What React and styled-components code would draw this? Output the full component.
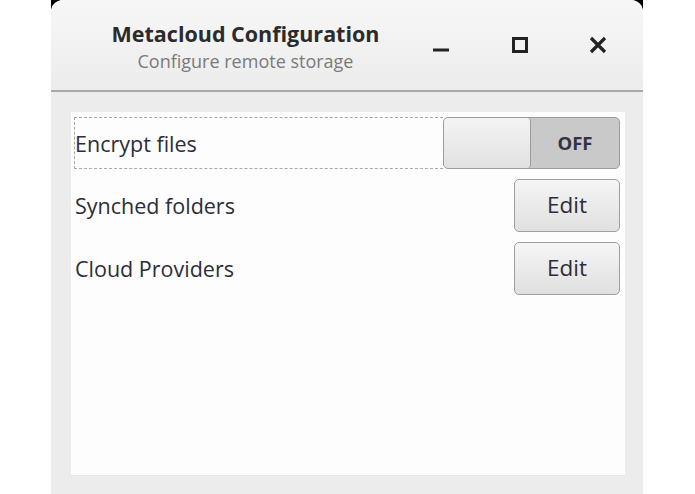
import React from "react";
import styled, { createGlobalStyle } from "styled-components";

const Global = createGlobalStyle`
  html, body { margin: 0; padding: 0; background: #ffffff; }
  body { width: 695px; height: 494px; overflow: hidden; font-family: "Open Sans", "Noto Sans", sans-serif; }
`;

const Stage = styled.div`
  width: 695px;
  height: 494px;
  display: flex;
  padding-left: 51px;
  box-sizing: border-box;
`;

const Frame = styled.div`
  width: 592px;
  height: 494px;
  background: #000;
  display: flex;
`;

const Window = styled.div`
  flex: 1;
  display: flex;
  flex-direction: column;
  border-radius: 12px 12px 0 0;
  overflow: hidden;
  background: #ececec;
`;

const Header = styled.div`
  height: 90px;
  flex: none;
  display: flex;
  align-items: center;
  background: linear-gradient(#f7f7f7, #ececec);
  border-bottom: 2px solid #a9a9a9;
`;

const TitleBlock = styled.div`
  width: 313px;
  padding-left: 38px;
  flex: none;
  display: flex;
  flex-direction: column;
  align-items: center;
  margin-top: 4px;
`;

const Title = styled.div`
  font-size: 21.5px;
  font-weight: 700;
  color: #2b2b2b;
  line-height: 28px;
  white-space: nowrap;
`;

const Subtitle = styled.div`
  font-size: 18px;
  color: #7a7a7a;
  line-height: 26px;
  white-space: nowrap;
`;

const WinButtons = styled.div`
  display: flex;
  align-items: center;
  margin-top: 0;
`;

const WinButton = styled.div`
  width: 78.5px;
  flex: none;
  display: flex;
  justify-content: center;
  align-items: center;
`;

const Body = styled.div`
  flex: 1;
  padding: 20px 18px 18px 20px;
  display: flex;
`;

const Panel = styled.div`
  flex: 1;
  background: #fdfdfd;
  border-bottom: 1px solid #e4e4e4;
  padding: 5px 5px 0 4px;
  display: flex;
  flex-direction: column;
  gap: 10px;
`;

const Row = styled.div`
  display: flex;
  align-items: center;
  justify-content: space-between;
  height: ${(p) => (p.$tall ? 53 : 52)}px;
`;

const Label = styled.div`
  flex: 1;
  align-self: stretch;
  display: flex;
  align-items: center;
  font-size: 21.5px;
  color: #2d2d3a;
  border: 1px dashed ${(p) => (p.$focused ? "#a8a8a8" : "transparent")};
  border-right: none;
  box-sizing: border-box;
  padding-bottom: 0;
  margin-left: -1px;
  white-space: nowrap;
`;

const Toggle = styled.div`
  width: 177px;
  height: 52px;
  box-sizing: border-box;
  border: 1px solid #9c9c9c;
  border-radius: 5px;
  background: #c9c9c9;
  display: flex;
  overflow: hidden;
`;

const Thumb = styled.div`
  width: 86px;
  border-right: 1px solid #9c9c9c;
  border-radius: 4px;
  background: linear-gradient(#f4f4f4, #e1e1e1);
`;

const ToggleText = styled.div`
  flex: 1;
  display: flex;
  align-items: center;
  justify-content: center;
  font-size: 18.5px;
  font-weight: 700;
  color: #33333f;
  padding-bottom: 2px;
`;

const Button = styled.div`
  width: 106px;
  height: 53px;
  box-sizing: border-box;
  border: 1px solid #9e9e9e;
  border-radius: 5px;
  background: linear-gradient(#f5f5f5, #e0e0e0);
  display: flex;
  align-items: center;
  justify-content: center;
  font-size: 22.5px;
  color: #2d2d3a;
  padding-bottom: 3px;
`;

export default function App() {
  return (
    <>
      <Global />
      <Stage>
        <Frame>
          <Window>
            <Header>
              <TitleBlock>
                <Title>Metacloud Configuration</Title>
                <Subtitle>Configure remote storage</Subtitle>
              </TitleBlock>
              <WinButtons>
                <WinButton>
                  <svg width="18" height="18" viewBox="0 0 18 18">
                    <rect x="1" y="12.5" width="16" height="3" fill="#222" />
                  </svg>
                </WinButton>
                <WinButton>
                  <svg width="18" height="18" viewBox="0 0 18 18">
                    <rect x="2.5" y="2.5" width="13" height="13" fill="none" stroke="#222" strokeWidth="3" />
                  </svg>
                </WinButton>
                <WinButton>
                  <svg width="18" height="18" viewBox="0 0 18 18">
                    <path d="M2 2 L16 16 M16 2 L2 16" stroke="#222" strokeWidth="3.2" />
                  </svg>
                </WinButton>
              </WinButtons>
            </Header>
            <Body>
              <Panel>
                <Row>
                  <Label $focused>Encrypt files</Label>
                  <Toggle>
                    <Thumb />
                    <ToggleText>OFF</ToggleText>
                  </Toggle>
                </Row>
                <Row $tall>
                  <Label>Synched folders</Label>
                  <Button>Edit</Button>
                </Row>
                <Row $tall>
                  <Label>Cloud Providers</Label>
                  <Button>Edit</Button>
                </Row>
              </Panel>
            </Body>
          </Window>
        </Frame>
      </Stage>
    </>
  );
}
